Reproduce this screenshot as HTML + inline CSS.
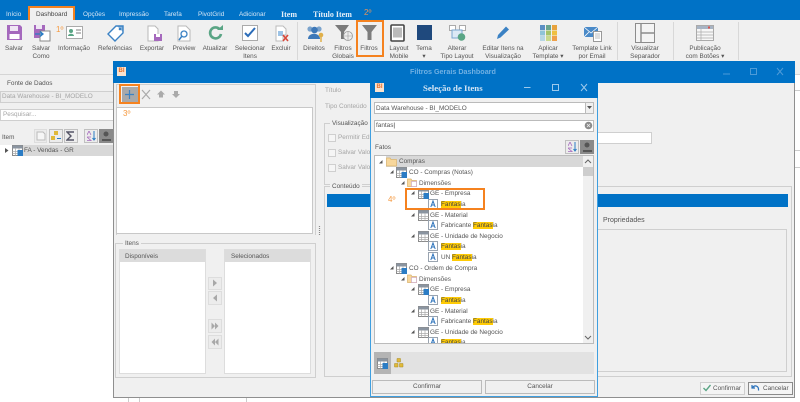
<!DOCTYPE html>
<html lang="pt"><head><meta charset="utf-8"><title>Filtros Gerais Dashboard</title>
<style>
html,body{margin:0;padding:0;background:#fff}
#p{position:relative;width:800px;height:402px;overflow:hidden;background:#fff;font:6.4px/10px "Liberation Sans",sans-serif;color:#555;filter:blur(.35px)}
#p div,#p svg,#p span.t{position:absolute}
.t{white-space:nowrap;margin-top:1px}
.c{transform:translateX(-50%);text-align:center;line-height:8px}
.w{color:#d5e6f5}
.o{color:#f59a42;font-size:8px}
.l{color:#a5a5a5}
.b{box-sizing:border-box;border:1px solid #cfcfcf}
.or{box-sizing:border-box;border:2px solid #f5821f}
.h{background:#ffcb05;color:#444}
.ib{box-sizing:border-box;border:1px solid #ddd;background:#ececec}
</style></head><body><div id="p">
<svg width="0" height="0" style="left:0;top:0"><defs>
<g id="tb"><rect x=".5" y=".5" width="10" height="10" fill="#fff" stroke="#8a8a8a"/><rect x=".5" y=".5" width="10" height="3" fill="#8a94a0"/><path d="M.5 6.5h10M.5 8.5h10M3.5 3v7.5M7 3v7.5" stroke="#aaa" fill="none" stroke-width=".7"/></g>
<g id="tf"><use href="#tb"/><rect x="5.5" y="5" width="5.5" height="6" fill="#2b7cc4"/></g>
<g id="a"><rect x=".5" y=".5" width="9" height="9" fill="#fff" stroke="#9aa4b0"/><path d="M2.8 8 5 2l2.2 6M3.6 6h2.8" fill="none" stroke="#2b72bb" stroke-width="1"/></g>
<g id="fd"><path d="M.5 2h3.500l1 1.500h4.500v6h-9z" fill="#f7d79c" stroke="#d9b26c" stroke-width=".7"/><rect x="4.500" y="4.500" width="5" height="5" fill="#fff" stroke="#c9a0c9" stroke-width=".6"/></g>
<path id="ex" d="M0 3.500 3.500 0v3.500z" fill="#555"/>
</defs></svg>

<!-- top bar -->
<div style="left:0;top:0;width:800px;height:20px;background:#0072c6"></div>
<span class="t w" style="left:6px;top:9px">Início</span>
<div style="left:29px;top:7px;width:46px;height:16px;background:#f0f0f0"></div>
<div class="or" style="left:28px;top:6px;width:47px;height:17px"></div>
<span class="t" style="left:36px;top:9px;color:#444">Dashboard</span>
<span class="t w" style="left:83px;top:9px">Opções</span>
<span class="t w" style="left:119px;top:9px">Impressão</span>
<span class="t w" style="left:164px;top:9px">Tarefa</span>
<span class="t w" style="left:198px;top:9px">PivotGrid</span>
<span class="t w" style="left:239px;top:9px">Adicionar</span>
<span class="t" style="left:281px;top:9px;color:#e3eef8;font:bold 8px/10px 'Liberation Serif',serif">Item</span>
<span class="t" style="left:313px;top:9px;color:#e3eef8;font:bold 8px/10px 'Liberation Serif',serif">Título Item</span>
<span class="t o" style="left:364px;top:7px;color:#e8955a">2º</span>

<!-- ribbon -->
<div style="left:0;top:20px;width:800px;height:54px;background:#f0f0f0;border-bottom:1px solid #d5d5d5"></div>
<div style="left:297px;top:22px;width:1px;height:38px;background:#d8d8d8"></div>
<div style="left:617px;top:22px;width:1px;height:38px;background:#d8d8d8"></div>
<div style="left:673px;top:22px;width:1px;height:38px;background:#d8d8d8"></div>
<div style="left:738px;top:22px;width:1px;height:38px;background:#d8d8d8"></div>

<svg style="left:6px;top:24px" width="17" height="17"><path d="M1 1h13l2 2v13H1z" fill="#a569bd"/><rect x="4" y="2" width="8" height="5" fill="#efe6f4"/><rect x="3.500" y="10" width="10" height="5" fill="#fff"/></svg>
<svg style="left:33px;top:24px" width="18" height="18"><path d="M1 1h11v13H1z" fill="#a569bd"/><rect x="3" y="1" width="6" height="4" fill="#efe6f4"/><rect x="7" y="7" width="10" height="10" fill="#fff" stroke="#888"/><path d="M2 10h7M7 7.500l3 2.500-3 2.500" stroke="#2b7cc4" stroke-width="1.300" fill="none"/></svg>
<span class="t o" style="left:56px;top:24px">1º</span>
<svg style="left:66px;top:26px" width="17" height="13"><rect x=".5" y=".5" width="16" height="12" fill="#fff" stroke="#aaa"/><circle cx="5" cy="5" r="2" fill="#5aa585"/><path d="M2 10c0-3 6-3 6 0z" fill="#5aa585"/><path d="M10 4h5M10 7h5" stroke="#aaa" stroke-width="1.500"/></svg>
<svg style="left:106px;top:24px" width="19" height="18"><path d="M2 10 10 2h7v7l-8 8z" fill="#fff" stroke="#3b82c4" stroke-width="1.400"/><circle cx="14" cy="5" r="1.300" fill="#3b82c4"/><path d="M11 2h6v6z" fill="#3b82c4" opacity=".6"/></svg>
<svg style="left:146px;top:25px" width="17" height="17"><path d="M2 1h7l3 3v12H2z" fill="#fff" stroke="#b8b8b8"/><rect x="8" y="9" width="8" height="7" fill="#a569bd"/><rect x="10" y="9" width="4" height="3" fill="#fff"/></svg>
<svg style="left:177px;top:25px" width="15" height="17"><path d="M1 1h8l4 4v11H1z" fill="#fff" stroke="#b8b8b8"/><circle cx="7" cy="9" r="3" fill="none" stroke="#3b82c4" stroke-width="1.300"/><path d="m5 11-3 4" stroke="#3b82c4" stroke-width="1.500"/></svg>
<svg style="left:208px;top:25px" width="16" height="16"><path d="M13 9a5.500 5.500 0 1 1-1.500-5" fill="none" stroke="#5aa585" stroke-width="2.600"/><path d="M9 5h6V0z" fill="#5aa585"/></svg>
<svg style="left:242px;top:25px" width="16" height="16"><rect x=".5" y=".5" width="15" height="15" fill="#fff" stroke="#aaa"/><path d="m3 8 3 3 7-8" fill="none" stroke="#2b6cb8" stroke-width="2"/></svg>
<svg style="left:275px;top:25px" width="14" height="17"><path d="M1 1h7l3 3v6H8v6H1z" fill="#fff" stroke="#bbb"/><rect x="3" y="6" width="5" height="5" fill="#9cc3e6"/><path d="m8 10 5 6m0-6-5 6" stroke="#d8483b" stroke-width="1.600"/></svg>
<svg style="left:305px;top:24px" width="20" height="18"><circle cx="5" cy="5" r="2.600" fill="#7ba3cc"/><circle cx="14" cy="5" r="2.600" fill="#7ba3cc"/><circle cx="9.500" cy="6" r="3.300" fill="#3d78b8"/><path d="M3 15c0-7 12-7 12 0z" fill="#3d78b8"/><circle cx="16" cy="11" r="2.300" fill="#e0b04a"/><path d="M16 12v6" stroke="#e0b04a" stroke-width="1.500"/></svg>
<svg style="left:335px;top:24px" width="18" height="18"><path d="M0 1h14L9 8v7H6V8z" fill="#7a7a7a"/><circle cx="13" cy="12" r="4.500" fill="#eee" stroke="#999" stroke-width=".8"/><path d="M8.500 12h9M13 7.500v9" stroke="#999" stroke-width=".6"/></svg>
<svg style="left:362px;top:24px" width="15" height="17"><path d="M0 1h15L9.500 8v8h-4V8z" fill="#7d7d7d"/></svg>
<div class="or" style="left:356px;top:20px;width:28px;height:37px"></div>
<svg style="left:390px;top:24px" width="15" height="18"><rect x="1" y="1" width="13" height="16" rx="1" fill="#fff" stroke="#444" stroke-width="1.600"/><rect x="3" y="3.500" width="9" height="10" fill="#bbb"/></svg>
<div style="left:417px;top:25px;width:15px;height:15px;background:#1f497d"></div>
<svg style="left:449px;top:25px" width="18" height="17"><rect x=".5" y=".5" width="6" height="5" fill="#fff" stroke="#aaa"/><rect x="10.500" y=".5" width="6" height="5" fill="#fff" stroke="#aaa"/><rect x="3" y="5" width="10" height="8" fill="#dce9f5" stroke="#7aa6cf"/><circle cx="12.500" cy="12" r="3.800" fill="#5aa585"/></svg>
<svg style="left:496px;top:25px" width="14" height="15"><path d="m1 14 1-4 8-8.500 3 3-8.500 8z" fill="#3b82c4"/></svg>
<svg style="left:540px;top:25px" width="17" height="16"><path fill="#5b8fc4" d="M0 0h5v5H0z"/><path fill="#6aa58e" d="M6 0h5v5H6z"/><path fill="#e8a33d" d="M12 0h5v5h-5z"/><path fill="#8fc4d8" d="M0 5.500h5v5H0z"/><path fill="#a5c46a" d="M6 5.500h5v5H6z"/><path fill="#f0c040" d="M12 5.500h5v5h-5z"/><path fill="#b7d7e5" d="M0 11h5v5H0z"/><path fill="#c9d98c" d="M6 11h5v5H6z"/><path fill="#efa04a" d="M12 11h5v5h-5z"/></svg>
<svg style="left:584px;top:26px" width="19" height="16"><rect width="14" height="10" y="1" fill="#4a8ac8"/><path d="m0 1 7 6 7-6M0 11l5-5M14 11 9 6" stroke="#fff" fill="none" stroke-width=".8"/><rect x="9.500" y="5.500" width="8" height="10" fill="#fff" stroke="#999"/><path d="M11 8h5M11 10h5M11 12h5" stroke="#aaa" stroke-width=".7"/></svg>
<svg style="left:635px;top:23px" width="20" height="20"><rect x=".5" y=".5" width="19" height="19" fill="#f4f4f4" stroke="#8c8c8c"/><path d="M6 .5v19M6 10h14" stroke="#8c8c8c" fill="none" stroke-width="1.400"/></svg>
<svg style="left:696px;top:25px" width="18" height="16"><rect x=".5" y=".5" width="17" height="15" fill="#f7f7f7" stroke="#aaa"/><rect x="1" y="1" width="16" height="3" fill="#a8b4c4"/><path d="M1 7h16M1 10h16M1 13h16M5 4v11" stroke="#aaa" stroke-width=".7"/><rect x="12" y="1.500" width="2" height="2" fill="#d9534f"/></svg>

<span class="t c" style="left:14px;top:44px">Salvar</span>
<span class="t c" style="left:41px;top:44px">Salvar<br>Como</span>
<span class="t c" style="left:74px;top:44px">Informação</span>
<span class="t c" style="left:115px;top:44px">Referências</span>
<span class="t c" style="left:152px;top:44px">Exportar</span>
<span class="t c" style="left:184px;top:44px">Preview</span>
<span class="t c" style="left:215px;top:44px">Atualizar</span>
<span class="t c" style="left:250px;top:44px">Selecionar<br>Itens</span>
<span class="t c" style="left:281px;top:44px">Excluir</span>
<span class="t c" style="left:314px;top:44px">Direitos</span>
<span class="t c" style="left:343px;top:44px">Filtros<br>Globais</span>
<span class="t c" style="left:369px;top:44px">Filtros</span>
<span class="t c" style="left:399px;top:44px">Layout<br>Mobile</span>
<span class="t c" style="left:424px;top:44px">Tema<br>▾</span>
<span class="t c" style="left:457px;top:44px">Alterar<br>Tipo Layout</span>
<span class="t c" style="left:503px;top:44px">Editar Itens na<br>Visualização</span>
<span class="t c" style="left:548px;top:44px">Aplicar<br>Template ▾</span>
<span class="t c" style="left:592px;top:44px">Template Link<br>por Email</span>
<span class="t c" style="left:645px;top:44px">Visualizar<br>Separador</span>
<span class="t c" style="left:705px;top:44px">Publicação<br>com Botões ▾</span>

<!-- left panel -->
<div style="left:0;top:75px;width:113px;height:70px;background:#f0f0f0"></div>
<span class="t" style="left:7px;top:78px">Fonte de Dados</span>
<div class="b" style="left:0;top:91px;width:114px;height:12px;background:#ececec"></div>
<span class="t l" style="left:2px;top:91px">Data Warehouse - BI_MODELO</span>
<div class="b" style="left:0;top:109px;width:114px;height:12px;background:#fff"></div>
<span class="t l" style="left:3px;top:109px">Pesquisar...</span>
<span class="t" style="left:2px;top:132px">Item</span>
<div class="ib" style="left:34px;top:129px;width:13px;height:14px"></div>
<div class="ib" style="left:49px;top:129px;width:14px;height:14px;border-color:#c0c0c0"></div>
<div class="ib" style="left:64px;top:129px;width:14px;height:14px;border-color:#c0c0c0"></div>
<div class="ib" style="left:84px;top:129px;width:14px;height:14px;border-color:#c0c0c0"></div>
<div style="left:99px;top:129px;width:14px;height:14px;background:#8a8a8a"></div>
<svg style="left:36px;top:131px" width="10" height="10"><path d="M1 1h6l2 2v6H1z" fill="#f6f6f6" stroke="#bbb"/></svg>
<svg style="left:51px;top:131px" width="10" height="10"><path fill="#e0b93a" d="M3 0h4v4H3zM0 5h4v4H0z"/><path fill="#2b7cc4" d="M6 7h4v1H6z"/></svg>
<svg style="left:66px;top:131px" width="10" height="10"><path d="M8 1H1l4 4-4 4h7" fill="none" stroke="#556" stroke-width="1.400"/></svg>
<svg style="left:87px;top:131px" width="9" height="10"><path d="M0 4 2 0l2 4M4 6H0l4 3.500H0" fill="none" stroke="#a569bd" stroke-width=".8"/><path d="M7 0v9M5.500 7 7 9l1.500-2" stroke="#2b7cc4" fill="none"/></svg>
<svg style="left:102px;top:131px" width="9" height="10"><circle cx="4" cy="3" r="2.500" fill="#555"/><path d="M0 9h9" stroke="#444" stroke-width="1.500"/></svg>
<div style="left:23px;top:145px;width:90px;height:11px;background:#d8d8d8"></div>
<svg style="left:5px;top:148px" width="4" height="5"><path d="M0 0l3.500 2.500L0 5z" fill="#555"/></svg>
<svg style="left:12px;top:145px" width="11" height="11"><use href="#tf"/></svg>
<span class="t" style="left:24px;top:145px">FA - Vendas - GR</span>

<!-- background window scraps -->
<div style="left:794px;top:90px;width:6px;height:1px;background:#ccc"></div>
<div style="left:794px;top:150px;width:6px;height:1px;background:#ccc"></div>
<div style="left:794px;top:167px;width:6px;height:1px;background:#ccc"></div>
<div style="left:128px;top:397px;width:1px;height:5px;background:#ccc"></div>
<div style="left:139px;top:397px;width:1px;height:5px;background:#ccc"></div>
<div style="left:246px;top:397px;width:1px;height:5px;background:#ccc"></div>

<!-- main window -->
<div style="left:113px;top:61px;width:682px;height:337px;box-sizing:border-box;background:#f0f0f0;border:1px solid #8f8f8f;border-top:0"></div>
<div style="left:113px;top:61px;width:682px;height:22px;background:#0072c6"></div>
<div style="left:117px;top:67px;width:9px;height:9px;background:#fbe3cf;color:#e8702a;font:bold 6px/9px 'Liberation Sans',sans-serif;text-align:center">BI</div>
<span class="t" style="left:410px;top:66px;color:#6fb0e3;font-weight:bold;font-size:7.2px">Filtros Gerais Dashboard</span>
<svg style="left:715px;top:65px" width="72" height="14"><path d="M8 9h7" stroke="#4d9bd8"/><rect x="35.500" y="3.500" width="6" height="6" fill="none" stroke="#4d9bd8"/><path d="m62 3 6 7m0-7-6 7" stroke="#4d9bd8"/></svg>

<div class="b" style="left:116px;top:84px;width:200px;height:151px;border-bottom:0"></div>
<div style="left:122px;top:87px;width:16px;height:15px;background:#a9a9a9"></div>
<div class="or" style="left:119px;top:84px;width:21px;height:20px"></div>
<svg style="left:122px;top:87px" width="60" height="15"><path d="M7.500 3v9M3 7.500h9" stroke="#3b82c4" stroke-width="1.200"/><path d="m20 3 8 9m0-9-8 9" stroke="#aaa" stroke-width="1.200"/><path d="m39 3.500 4 4h-2v3h-4v-3h-2z" fill="#aaa"/><path d="M52 4h4v3h2l-4 4-4-4h2z" fill="#aaa"/></svg>
<div class="b" style="left:116px;top:107px;width:197px;height:127px;background:#fff;border-color:#c8c8c8"></div>
<span class="t o" style="left:123px;top:108px">3º</span>
<svg style="left:318px;top:225px" width="3" height="11"><path d="M1.500 1v9" stroke="#888" stroke-width="1.200" stroke-dasharray="1 1"/></svg>

<div class="b" style="left:115px;top:243px;width:201px;height:135px"></div>
<span class="t" style="left:123px;top:238px;background:#f0f0f0;padding:0 2px">Itens</span>
<div class="b" style="left:119px;top:249px;width:87px;height:125px;background:#fff;border-color:#ddd"></div>
<div style="left:120px;top:250px;width:85px;height:12px;background:#dcdcdc"></div>
<span class="t" style="left:125px;top:251px">Disponíveis</span>
<div class="b" style="left:224px;top:249px;width:87px;height:125px;background:#fff;border-color:#ddd"></div>
<div style="left:225px;top:250px;width:85px;height:12px;background:#dcdcdc"></div>
<span class="t" style="left:231px;top:251px">Selecionados</span>
<div class="ib" style="left:208px;top:277px;width:14px;height:13px"></div>
<div class="ib" style="left:208px;top:291px;width:14px;height:14px"></div>
<div class="ib" style="left:208px;top:319px;width:14px;height:14px"></div>
<div class="ib" style="left:208px;top:335px;width:14px;height:14px"></div>
<svg style="left:208px;top:277px" width="14" height="72"><path d="M5 2.500 9 6 5 9.500zM9 17.500 5 21l4 3.500zM3.500 45.500 7 49l-3.500 3.500zM7 45.500l3.500 3.500L7 52.500zM10.500 61.500 7 65l3.500 3.500zM7 61.500 3.500 65 7 68.500z" fill="#a8a8a8"/></svg>

<span class="t l" style="left:325px;top:85px">Título</span>
<span class="t l" style="left:325px;top:101px">Tipo Conteúdo</span>
<div class="b" style="left:324px;top:123px;width:50px;height:62px"></div>
<span class="t" style="left:330px;top:118px;background:#f0f0f0;padding:0 2px">Visualização</span>
<div class="b" style="left:328px;top:134px;width:8px;height:8px;background:#f5f5f5"></div>
<div class="b" style="left:328px;top:149px;width:8px;height:8px;background:#f5f5f5"></div>
<div class="b" style="left:328px;top:164px;width:8px;height:8px;background:#f5f5f5"></div>
<span class="t l" style="left:338px;top:132px">Permitir Edição</span>
<span class="t l" style="left:338px;top:147px">Salvar Valor</span>
<span class="t l" style="left:338px;top:162px">Salvar Valor</span>
<div class="b" style="left:560px;top:132px;width:92px;height:12px;background:#fff"></div>

<div class="b" style="left:324px;top:186px;width:468px;height:191px"></div>
<span class="t" style="left:330px;top:181px;background:#f0f0f0;padding:0 2px">Conteúdo</span>
<div style="left:327px;top:194px;width:461px;height:13px;background:#0072c6"></div>
<span class="t" style="left:603px;top:215px;font-size:7px">Propriedades</span>
<div class="b" style="left:590px;top:229px;width:197px;height:143px"></div>

<div class="b" style="left:700px;top:382px;width:45px;height:13px;background:#f4f4f4"></div>
<div class="b" style="left:748px;top:382px;width:45px;height:13px;background:#f4f4f4;border-color:#8a8a8a"></div>
<svg style="left:703px;top:384px" width="8" height="8"><path d="m.5 4 2.500 2.500L7.500 1" fill="none" stroke="#5aa585" stroke-width="1.400"/></svg>
<svg style="left:751px;top:384px" width="9" height="8"><path d="M1 1v3h3M1.500 3.500C4 .5 8 2 7.500 6.500" fill="none" stroke="#2b72bb" stroke-width="1.200"/></svg>
<span class="t" style="left:713px;top:383px">Confirmar</span>
<span class="t" style="left:763px;top:383px">Cancelar</span>

<!-- dialog -->
<div style="left:370px;top:77px;width:228px;height:320px;box-sizing:border-box;background:#f0f0f0;border:1px solid #3f9fe0"></div>
<div style="left:370px;top:77px;width:228px;height:21px;background:#0072c6"></div>
<div style="left:375px;top:83px;width:9px;height:9px;background:#fbe3cf;color:#e8702a;font:bold 6px/9px 'Liberation Sans',sans-serif;text-align:center">BI</div>
<span class="t" style="left:423px;top:82px;color:#d5e6f5;font:bold 8.8px/10px 'Liberation Serif',serif">Seleção de Itens</span>
<svg style="left:520px;top:81px" width="72" height="14"><path d="M4 6.500h6.500" stroke="#9cc9ec"/><rect x="32.500" y="3.500" width="6" height="6" fill="none" stroke="#9cc9ec"/><path d="m61 3 6 7m0-7-6 7" stroke="#9cc9ec"/></svg>

<div class="b" style="left:374px;top:102px;width:220px;height:12px;background:#fff;border-color:#bbb"></div>
<div class="b" style="left:585px;top:102px;width:9px;height:12px;background:#f0f0f0;border-color:#bbb"></div>
<svg style="left:587px;top:106px" width="5" height="4"><path d="M0 0h5L2.500 3z" fill="#555"/></svg>
<span class="t" style="left:376px;top:103px">Data Warehouse - BI_MODELO</span>
<div class="b" style="left:374px;top:120px;width:220px;height:12px;background:#fff;border-color:#bbb"></div>
<span class="t" style="left:376px;top:120px">fantas<span style="color:#333">|</span></span>
<svg style="left:584px;top:121px" width="9" height="9"><circle cx="4.500" cy="4.500" r="3.800" fill="#8c8c8c"/><path d="m3 3 3 3m0-3-3 3" stroke="#eee" stroke-width=".8"/></svg>
<span class="t" style="left:375px;top:142px">Fatos</span>
<div class="ib" style="left:565px;top:140px;width:14px;height:14px;border-color:#c0c0c0"></div>
<div style="left:580px;top:140px;width:14px;height:14px;background:#8a8a8a"></div>
<svg style="left:568px;top:142px" width="9" height="10"><path d="M0 4 2 0l2 4M4 6H0l4 3.500H0" fill="none" stroke="#a569bd" stroke-width=".8"/><path d="M7 0v9M5.500 7 7 9l1.500-2" stroke="#2b7cc4" fill="none"/></svg>
<svg style="left:583px;top:142px" width="9" height="10"><circle cx="4" cy="3" r="2.500" fill="#555"/><path d="M0 9h9" stroke="#444" stroke-width="1.500"/></svg>

<div style="left:374px;top:155px;width:220px;height:189px;box-sizing:border-box;background:#fff;border:1px solid #bbb;overflow:hidden" id="tree">
<div style="left:11px;top:0;width:197px;height:11px;background:#d8d8d8"></div>
<div style="right:0;top:0;width:10px;height:187px;background:#f0f0f0"></div>
<div style="right:0;top:11px;width:10px;height:9px;background:#cdcdcd"></div>
<svg style="left:209px;top:3px" width="8" height="5"><path d="m1 4 3-3 3 3" fill="none" stroke="#666"/></svg>
<svg style="left:209px;top:179px" width="8" height="5"><path d="m1 1 3 3 3-3" fill="none" stroke="#666"/></svg>

<svg style="left:4px;top:4px" width="4" height="4"><use href="#ex"/></svg><svg style="left:11px;top:0" width="11" height="11"><path d="M.5 2h3.500l1 1.500h5.500v6.500H.5z" fill="#f7d79c" stroke="#dcb56e" stroke-width=".7"/></svg><span class="t" style="left:24px;top:0">Compras</span>
<svg style="left:15px;top:14px" width="4" height="4"><use href="#ex"/></svg><svg style="left:21px;top:11px" width="11" height="11"><use href="#tf"/></svg><span class="t" style="left:34px;top:11px">CO - Compras (Notas)</span>
<svg style="left:26px;top:25px" width="4" height="4"><use href="#ex"/></svg><svg style="left:32px;top:21px" width="10" height="10"><use href="#fd"/></svg><span class="t" style="left:44px;top:22px">Dimensões</span>
<svg style="left:36px;top:35px" width="4" height="4"><use href="#ex"/></svg><svg style="left:43px;top:32px" width="11" height="11"><use href="#tf"/></svg><span class="t" style="left:55px;top:32px">GE - Empresa</span>
<svg style="left:53px;top:43px" width="10" height="10"><use href="#a"/></svg><span class="t" style="left:66px;top:43px"><span class="h">Fantas</span>ia</span>
<svg style="left:36px;top:57px" width="4" height="4"><use href="#ex"/></svg><svg style="left:43px;top:54px" width="11" height="11"><use href="#tb"/></svg><span class="t" style="left:55px;top:54px">GE - Material</span>
<svg style="left:53px;top:64px" width="10" height="10"><use href="#a"/></svg><span class="t" style="left:66px;top:64px">Fabricante <span class="h">Fantas</span>ia</span>
<svg style="left:36px;top:78px" width="4" height="4"><use href="#ex"/></svg><svg style="left:43px;top:75px" width="11" height="11"><use href="#tb"/></svg><span class="t" style="left:55px;top:75px">GE - Unidade de Negocio</span>
<svg style="left:53px;top:85px" width="10" height="10"><use href="#a"/></svg><span class="t" style="left:66px;top:85px"><span class="h">Fantas</span>ia</span>
<svg style="left:53px;top:96px" width="10" height="10"><use href="#a"/></svg><span class="t" style="left:66px;top:96px">UN <span class="h">Fantas</span>ia</span>
<svg style="left:15px;top:110px" width="4" height="4"><use href="#ex"/></svg><svg style="left:21px;top:107px" width="11" height="11"><use href="#tf"/></svg><span class="t" style="left:34px;top:107px">CO - Ordem de Compra</span>
<svg style="left:26px;top:121px" width="4" height="4"><use href="#ex"/></svg><svg style="left:32px;top:117px" width="10" height="10"><use href="#fd"/></svg><span class="t" style="left:44px;top:118px">Dimensões</span>
<svg style="left:36px;top:131px" width="4" height="4"><use href="#ex"/></svg><svg style="left:43px;top:128px" width="11" height="11"><use href="#tf"/></svg><span class="t" style="left:55px;top:128px">GE - Empresa</span>
<svg style="left:53px;top:139px" width="10" height="10"><use href="#a"/></svg><span class="t" style="left:66px;top:139px"><span class="h">Fantas</span>ia</span>
<svg style="left:36px;top:153px" width="4" height="4"><use href="#ex"/></svg><svg style="left:43px;top:150px" width="11" height="11"><use href="#tb"/></svg><span class="t" style="left:55px;top:150px">GE - Material</span>
<svg style="left:53px;top:160px" width="10" height="10"><use href="#a"/></svg><span class="t" style="left:66px;top:160px">Fabricante <span class="h">Fantas</span>ia</span>
<svg style="left:36px;top:174px" width="4" height="4"><use href="#ex"/></svg><svg style="left:43px;top:171px" width="11" height="11"><use href="#tb"/></svg><span class="t" style="left:55px;top:171px">GE - Unidade de Negocio</span>
<svg style="left:53px;top:181px" width="10" height="10"><use href="#a"/></svg><span class="t" style="left:66px;top:181px"><span class="h">Fantas</span>ia</span>
</div>
<div class="or" style="left:405px;top:188px;width:80px;height:22px"></div>
<span class="t o" style="left:388px;top:194px">4º</span>

<div style="left:374px;top:352px;width:220px;height:22px;background:#e2e2e2"></div>
<div style="left:374px;top:352px;width:17px;height:22px;background:#b4b4b4"></div>
<svg style="left:377px;top:358px" width="11" height="11"><use href="#tf"/></svg>
<svg style="left:394px;top:358px" width="10" height="10"><path fill="#e0b93a" stroke="#a88a20" stroke-width=".5" d="M3 .5h3.500V4H3zM.5 5.500H4V9H.5zM5.500 5.500H9V9H5.500z"/></svg>
<div class="b" style="left:372px;top:380px;width:110px;height:14px;background:#f0f0f0;border-color:#bbb;text-align:center;line-height:12px">Confirmar</div>
<div class="b" style="left:485px;top:380px;width:110px;height:14px;background:#f0f0f0;border-color:#bbb;text-align:center;line-height:12px">Cancelar</div>
</div></body></html>
